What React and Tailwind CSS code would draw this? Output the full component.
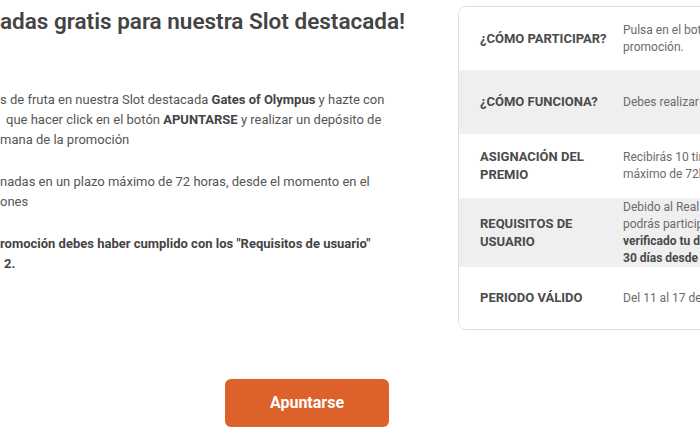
import React from 'react';

const font = "font-['Roboto','Noto_Sans',sans-serif]";

// one text line whose beginning lies off the left edge of the page
function Line({ hidden, children, shift = 0, className = '' }) {
  return (
    <div className={`flex whitespace-nowrap ${className}`}>
      <div className="flex w-[300px] shrink-0 justify-end overflow-hidden">
        <span className="shrink-0">{hidden}</span>
      </div>
      <span style={{ marginLeft: shift }}>{children}</span>
    </div>
  );
}

const rows = [
  {
    label: ['¿CÓMO PARTICIPAR?'],
    h: 'h-[63px]',
    bg: 'bg-white',
    value: [<>Pulsa en el botón APUNTARSE para participar en la</>, <>promoción.</>],
  },
  {
    label: ['¿CÓMO FUNCIONA?'],
    h: 'h-[64px]',
    bg: 'bg-[#efefef]',
    value: [<>Debes realizar un depósito mínimo de 10€</>],
  },
  {
    label: ['ASIGNACIÓN DEL', 'PREMIO'],
    h: 'h-[64px]',
    bg: 'bg-white',
    value: [<>Recibirás 10 tiradas gratis en un plazo</>, <>máximo de 72h</>],
  },
  {
    label: ['REQUISITOS DE', 'USUARIO'],
    h: 'h-[69px]',
    bg: 'bg-[#efefef]',
    value: [
      <>Debido al Real Decreto de Comunicaciones,</>,
      <>podrás participar si has</>,
      <b className="font-bold text-[#4a4a4a]">verificado tu documentación hace más de</b>,
      <b className="font-bold text-[#4a4a4a]">30 días desde tu registro</b>,
    ],
  },
  {
    label: ['PERIODO VÁLIDO'],
    h: 'h-[62px]',
    bg: 'bg-white',
    value: [<>Del 11 al 17 de julio</>],
  },
];

export default function App() {
  return (
    <div className={`relative h-[441px] w-[700px] overflow-hidden bg-white ${font}`}>
      <div className="flex w-[1100px] -ml-[300px]">
        {/* left column: promotion text */}
        <div className="w-[720px] shrink-0 pt-[5px]">
          <Line hidden="¡Consigue tir" className="text-[22.5px] font-semibold leading-[32px] text-[#444]">
            adas gratis para nuestra Slot destacada!
          </Line>

          <div className="mt-[53px] text-[13px] leading-[20px] text-[#555]">
            <Line hidden="Consigue tirada">
              s de fruta en nuestra Slot destacada <b className="font-bold text-[#444]">Gates of Olympus</b> y hazte con
            </Line>
            <Line hidden="premios. Solo tienes" shift={6}>
              que hacer click en el botón <b className="font-bold text-[#444]">APUNTARSE</b> y realizar un depósito de
            </Line>
            <Line hidden="10€ durante la se">mana de la promoción</Line>

            <div className="mt-[22px]">
              <Line hidden="Las tiradas serán asig">nadas en un plazo máximo de 72 horas, desde el momento en el</Line>
              <Line hidden="que cumplas las condici">ones</Line>
            </div>

            <div className="mt-[22px] font-bold text-[#444]">
              <Line hidden="Para participar en la p">romoción debes haber cumplido con los "Requisitos de usuario"</Line>
              <Line hidden="antes del 11/07/202" shift={4}>2.</Line>
            </div>
          </div>

          <button className="ml-[525px] mt-[105px] flex h-[48px] w-[164px] items-center justify-center rounded-md bg-[#dc612b] text-[16px] font-bold text-white">
            Apuntarse
          </button>
        </div>

        {/* right column: promotion summary card */}
        <div className="ml-[38px] mt-[6px] h-fit w-[340px] shrink-0 overflow-hidden rounded-lg border border-[#dedede]">
          {rows.map((row, i) => (
            <div key={i} className={`flex items-center pl-[21px] ${row.h} ${row.bg}`}>
              <div className="w-[143px] shrink-0 text-[13px] font-bold leading-[18px] text-[#4a4a4a]">
                {row.label.map((l, j) => (
                  <div key={j} className="whitespace-nowrap">{l}</div>
                ))}
              </div>
              <div className="text-[12px] leading-[17px] text-[#6b6b6b]">
                {row.value.map((v, j) => (
                  <div key={j} className="whitespace-nowrap">{v}</div>
                ))}
              </div>
            </div>
          ))}
        </div>
      </div>
    </div>
  );
}
